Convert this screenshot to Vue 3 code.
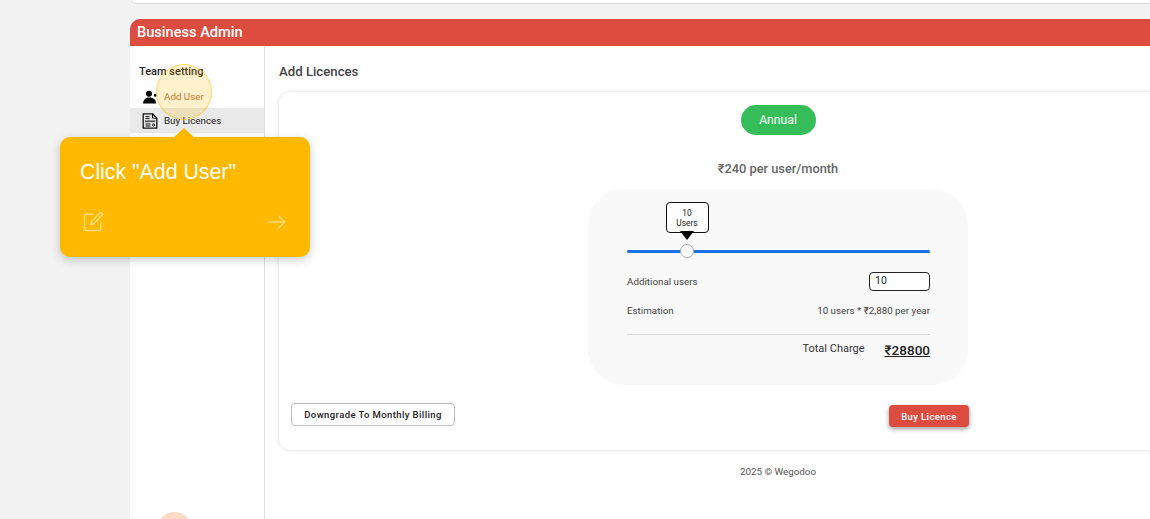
<script setup>
</script>

<template>
  <div class="page">
    <div class="top-strip"></div>
    <section class="window">
      <header class="bar">Business Admin</header>
      <div class="body">
        <aside class="side">
          <h3 class="side-title">Team setting</h3>
          <div class="side-item">
            <svg class="ic" viewBox="0 0 16 16" width="16" height="16">
              <circle cx="7" cy="4.800" r="3" fill="#000" />
              <circle cx="13.200" cy="6.400" r="1.300" fill="#000" />
              <path d="M1 14.500c.2-3.600 2.600-6 6-6 2 0 3.500.5 4.800 1.300 1.400.9 2.200 2.500 2.400 4.700z" fill="#000" />
            </svg>
            <span class="add-label">Add User</span>
          </div>
          <div class="side-item active">
            <svg class="ic" viewBox="0 0 16 16" width="16" height="16" fill="none" stroke="#111" stroke-width="1.300">
              <path d="M1.200.8h9.300l4.300 4.300v10.100H1.200z" stroke-linejoin="round" />
              <path d="M10.500.8v4.300h4.300" stroke-width="1" />
              <path d="M3.500 3.600h4M3.500 5.600h4" stroke-width="1" />
              <path d="M3 8.300h10.200" stroke-width="1.800" stroke="#555" />
              <path d="M3.500 11h5M3.500 13h5" stroke-width="1" />
              <circle cx="11.600" cy="12" r="1.100" stroke-width="1" />
            </svg>
            <span>Buy Licences</span>
          </div>
        </aside>
        <main class="content">
          <h2 class="heading">Add Licences</h2>
          <div class="card">
            <div class="col">
              <div class="pill">Annual</div>
              <p class="price">₹240 per user/month</p>
              <div class="panel">
                <div class="slider">
                  <div class="bubble">
                    <span class="b-num">10</span>
                    <span>Users</span>
                  </div>
                  <div class="thumb"></div>
                </div>
                <div class="row first">
                  <span>Additional users</span>
                  <div class="input">10</div>
                </div>
                <div class="row est">
                  <span>Estimation</span>
                  <span>10 users * ₹2,880 per year</span>
                </div>
                <div class="total">
                  <span class="total-label">Total Charge</span>
                  <span class="total-val">₹28800</span>
                </div>
              </div>
            </div>
            <div class="actions">
              <button class="btn-outline">Downgrade To Monthly Billing</button>
              <button class="btn-red">Buy Licence</button>
            </div>
          </div>
          <p class="foot">2025 © Wegodoo</p>
        </main>
      </div>
    </section>

    <div class="spot"></div>
    <div class="spot-low"></div>
    <div class="tip">
      <p class="tip-text">Click "Add User"</p>
      <div class="tip-icons">
        <svg viewBox="0 0 20 20" width="20" height="20" fill="none" stroke="#ffdc80" stroke-width="1.500" stroke-linecap="round" stroke-linejoin="round">
          <path d="M10 2.200H3.500a2 2 0 0 0-2 2v12.300a2 2 0 0 0 2 2h12.300a2 2 0 0 0 2-2V10" />
          <path d="M16.500 1.200a1.600 1.600 0 0 1 2.300 2.300L11.200 11.500l-3.700 1.500 1.400-3.800z" />
        </svg>
        <svg viewBox="0 0 18 16" width="18" height="16" fill="none" stroke="#ffdc80" stroke-width="1.300" stroke-linecap="round" stroke-linejoin="round">
          <path d="M.8 8h16M10.500 1.700 16.800 8l-6.300 6.300" />
        </svg>
      </div>
    </div>
  </div>
</template>

<style>
html, body { margin: 0; overflow: hidden; background: #f2f2f2; }
</style>

<style scoped>
.page {
  position: relative;
  width: 1150px;
  height: 519px;
  overflow: hidden;
  background: #f2f2f2;
  font-family: Roboto, "Noto Sans", sans-serif;
  color: #222;
}
.top-strip {
  height: 3px;
  margin-left: 132px;
  width: 1100px;
  background: #fff;
  border-bottom: 1px solid #dcdcdc;
  border-left: 1px solid #e2e2e2;
  border-bottom-left-radius: 6px;
}
.window {
  width: 1200px;
  margin: 15px 0 0 130px;
  background: #fff;
  border-radius: 10px 0 0 0;
}
.bar {
  height: 27px;
  line-height: 27px;
  padding-left: 7px;
  background: #dc4c3f;
  color: #fff;
  font-size: 14.600px;
  font-weight: 500;
  border-radius: 10px 0 0 0;
}
.body { display: flex; height: 473px; }
.side {
  width: 134px;
  flex: none;
  border-right: 1px solid #dedede;
  padding-top: 18px;
}
.side-title {
  margin: 0 0 5px 9px;
  font-size: 11px;
  font-weight: 500;
  line-height: 15px;
  color: #222;
}
.side-item {
  display: flex;
  align-items: center;
  gap: 6px;
  height: 25px;
  padding-left: 12px;
  font-size: 9.800px;
  color: #222;
}
.side-item + .side-item { margin-top: -1px; }
.active { background: #e9e9e9; }
.add-label { color: #c2693c; }
.content { flex: 1; padding: 0 0 0 14px; }
.heading {
  margin: 18px 0 13px;
  font-size: 13.200px;
  font-weight: 500;
  line-height: 15px;
  color: #444;
}
.card {
  width: 998px;
  height: 358px;
  box-sizing: border-box;
  background: #fff;
  border-radius: 12px;
  box-shadow: 0 0 5px rgba(0, 0, 0, .14);
  position: relative;
  padding: 13px 0 0 12px;
}
.col {
  width: 380px;
  margin-left: 297px;
  display: flex;
  flex-direction: column;
  align-items: center;
}
.pill {
  width: 75px;
  height: 30px;
  border-radius: 15px;
  background: #34bd59;
  color: #fff;
  font-size: 12.200px;
  line-height: 30px;
  text-align: center;
}
.price {
  margin: 26px 0 13px;
  font-size: 12.800px;
  line-height: 15px;
  font-weight: 500;
  color: #666;
}
.panel {
  width: 380px;
  height: 196px;
  box-sizing: border-box;
  padding: 0 38px 0 39px;
  background: #f9f9f9;
  border-radius: 36px;
  display: flex;
  flex-direction: column;
}
.slider {
  position: relative;
  height: 3px;
  margin-top: 61px;
  background: #1a73e8;
  border-radius: 2px;
}
.thumb {
  position: absolute;
  left: 53px;
  top: -6px;
  width: 14px;
  height: 14px;
  box-sizing: border-box;
  border-radius: 50%;
  background: #fff;
  border: 1px solid #aaa;
}
.bubble {
  position: absolute;
  left: 38.500px;
  top: -48px;
  width: 43px;
  height: 31px;
  box-sizing: border-box;
  background: #fff;
  border: 1.500px solid #111;
  border-radius: 4px;
  display: flex;
  flex-direction: column;
  align-items: center;
  justify-content: center;
  font-size: 8.400px;
  line-height: 10px;
  color: #222;
}
.bubble::after {
  content: "";
  position: absolute;
  left: 20px;
  top: 28px;
  border-left: 7px solid transparent;
  border-right: 7px solid transparent;
  border-top: 9px solid #000;
  transform: translateX(-50%);
}
.row {
  display: flex;
  justify-content: space-between;
  align-items: center;
  font-size: 9.800px;
  color: #444;
}
.first { margin-top: 19px; height: 19px; }
.est { margin-top: 9px; height: 20px; }
.input {
  width: 61px;
  height: 19px;
  box-sizing: border-box;
  border: 1.500px solid #222;
  border-radius: 4px;
  background: #fff;
  padding-left: 5px;
  font-size: 10.500px;
  line-height: 16px;
  color: #222;
}
.total {
  margin-top: 14px;
  border-top: 1px solid #d8d8d8;
  display: flex;
  justify-content: flex-end;
  align-items: center;
  gap: 20px;
  padding-top: 7px;
}
.total-label { font-size: 11px; color: #333; margin-top: -4px; }
.total-val {
  font-size: 13.500px;
  font-weight: 500;
  color: #222;
  text-decoration: underline;
  line-height: 16px;
}
.actions {
  display: flex;
  justify-content: space-between;
  align-items: flex-start;
  width: 678px;
  margin-top: 18px;
}
.btn-outline {
  width: 164px;
  height: 23px;
  padding: 0;
  background: #fff;
  border: 1px solid #bdbdbd;
  border-radius: 4px;
  font: 500 9.500px Roboto, sans-serif;
  letter-spacing: .4px;
  color: #222;
}
.btn-red {
  width: 80px;
  height: 22px;
  margin-top: 2px;
  padding: 0;
  background: #dc4c3f;
  border: none;
  border-radius: 4px;
  box-shadow: 0 2px 5px rgba(0, 0, 0, .4);
  font: 500 9.500px Roboto, sans-serif;
  letter-spacing: .4px;
  color: #fff;
}
.foot {
  width: 998px;
  margin: 16px 0 0;
  font-size: 9.800px;
  line-height: 12px;
  text-align: center;
  color: #555;
}
.spot {
  position: absolute;
  left: 156px;
  top: 64px;
  width: 56px;
  height: 56px;
  box-sizing: border-box;
  border-radius: 50%;
  background: rgba(255, 185, 0, .2);
  border: 1.500px solid rgba(255, 185, 0, .45);
}
.spot-low {
  position: absolute;
  left: 157px;
  top: 512px;
  width: 35px;
  height: 35px;
  border-radius: 50%;
  background: #fbdcc9;
}
.tip {
  position: absolute;
  left: 60px;
  top: 137px;
  width: 250px;
  height: 120px;
  box-sizing: border-box;
  padding: 22px 20px 0;
  background: #ffb900;
  border-radius: 10px;
  box-shadow: 0 3px 10px rgba(0, 0, 0, .2);
  display: flex;
  flex-direction: column;
}
.tip::before {
  content: "";
  position: absolute;
  left: 114px;
  top: -9px;
  border-left: 10px solid transparent;
  border-right: 10px solid transparent;
  border-bottom: 9px solid #ffb900;
}
.tip-text {
  margin: 0;
  font: 21.300px/26px "Liberation Sans", Arial, sans-serif;
  color: #fff;
}
.tip-icons {
  display: flex;
  justify-content: space-between;
  align-items: center;
  margin-top: 27px;
  padding: 0 4px 0 3px;
}
</style>
